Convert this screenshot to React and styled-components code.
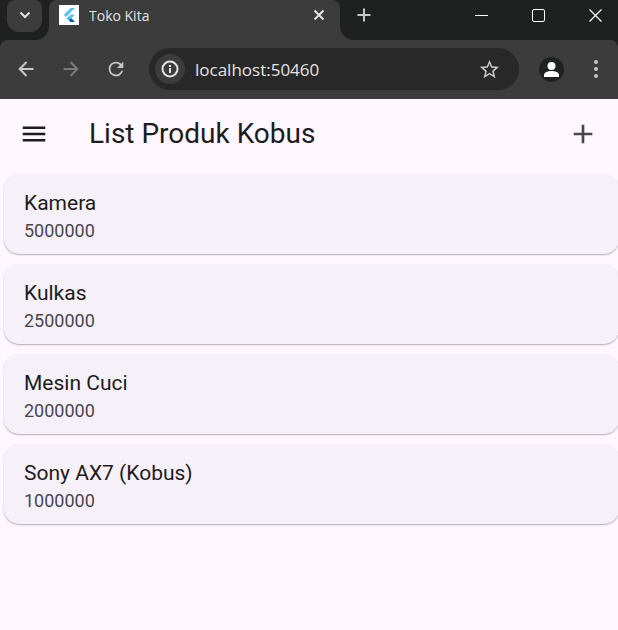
import React from "react";
import styled, { createGlobalStyle } from "styled-components";

const GlobalStyle = createGlobalStyle`
  *, *::before, *::after { box-sizing: border-box; }
  html, body { margin: 0; background: #fef7ff; }
  button, input { font: inherit; color: inherit; border: 0; padding: 0; background: none; }
  button { cursor: pointer; }
  svg { display: block; flex: none; }
`;

const Window = styled.div`
  min-height: 100vh;
  overflow-x: hidden;
  background: #fef7ff;
`;

const BrowserFrame = styled.header`
  background: #1f2120;
  color: #e3e3e3;
  font-family: "Open Sans", "Noto Sans", sans-serif;
`;

const TabStrip = styled.div`
  display: flex;
  height: 40px;
`;

const StripEdge = styled.div`
  display: flex;
  flex: ${({ $grow }) => ($grow ? "1 1 0" : "none")};
  background: #3c3c3c;
`;

const StripFill = styled.div`
  display: flex;
  flex: 1;
  align-items: flex-start;
  padding: ${({ $side }) => ($side === "left" ? "0 7px" : "0 1px 0 10px")};
  background: #1f2120;
  border-radius: ${({ $side }) => ($side === "left" ? "0 0 14px 0" : "0 0 0 14px")};
`;

const TabSearchButton = styled.button`
  display: grid;
  place-items: center;
  width: 35px;
  height: 32px;
  padding-bottom: 2px;
  background: #3c3c3c;
  border-radius: 8px 8px 12px 12px;
`;

const TabShell = styled.div`
  flex: 0 1 291px;
  min-width: 0;
  background: #1f2120;
`;

const Tab = styled.div`
  display: flex;
  align-items: flex-start;
  gap: 10px;
  height: 100%;
  padding: 5px 10px;
  background: #3c3c3c;
  border-radius: 8px 8px 0 0;
`;

const Favicon = styled.span`
  display: grid;
  place-items: center;
  width: 20px;
  height: 20px;
  background: #ffffff;
`;

const TabTitle = styled.span`
  flex: 1;
  min-width: 0;
  overflow: hidden;
  white-space: nowrap;
  font-size: 14px;
  line-height: 21px;
`;

const StripButton = styled.button`
  display: grid;
  place-items: center;
  width: ${({ $width }) => $width}px;
  height: ${({ $height }) => $height}px;
`;

const NewTabButton = styled(StripButton)`
  color: #c7c7c7;
`;

const WindowControls = styled.div`
  display: flex;
  gap: 13px;
  margin-left: auto;
  color: #ffffff;
`;

const Toolbar = styled.div`
  display: flex;
  align-items: center;
  height: 59px;
  padding: 0 10px 1px 11px;
  background: #3c3c3c;
  border-radius: 8px 8px 0 0;
`;

const NavGroup = styled.nav`
  display: flex;
  gap: 15px;
  margin-right: 18px;
`;

const NavButton = styled.button`
  display: grid;
  place-items: center;
  width: 30px;
  height: 30px;
  color: #c7c7c7;

  &:disabled { color: #7b7b7b; }
`;

const AddressBar = styled.div`
  display: flex;
  align-items: center;
  flex: 1;
  min-width: 0;
  height: 42px;
  padding: 0 15px 0 6px;
  background: #282828;
  border-radius: 21px;
`;

const SiteInfo = styled.button`
  display: grid;
  place-items: center;
  flex: none;
  width: 30px;
  height: 30px;
  background: #3c3c3c;
  border-radius: 50%;
`;

const AddressInput = styled.input`
  flex: 1;
  min-width: 0;
  height: 30px;
  margin-left: 10px;
  font-size: 17px;
  outline: none;
`;

const Profile = styled.button`
  display: grid;
  place-items: center;
  width: 25px;
  height: 25px;
  margin: 0 20px;
  background: #1f2120;
  border-radius: 50%;
  color: #ffffff;
`;

const MenuButton = styled(NavButton)`
  width: 24px;
`;

const AppBar = styled.div`
  display: flex;
  align-items: center;
  height: 70px;
  padding: 0 19px;
  color: #1d1b20;
  font-family: Roboto, sans-serif;
`;

const AppTitle = styled.h1`
  flex: 1;
  margin: 0 0 0 40px;
  font-size: 28px;
  font-weight: 400;
  line-height: 36px;
`;

const AppBarButton = styled.button`
  display: grid;
  place-items: center;
  width: ${({ $size }) => $size}px;
  height: ${({ $size }) => $size}px;
  color: ${({ $muted }) => ($muted ? "#49454f" : "#1d1b20")};
`;

const ProductList = styled.ul`
  display: grid;
  gap: 10px;
  margin: 0 -1px 0 0;
  padding: 5px 0 5px 4px;
  list-style: none;
  font-family: Roboto, sans-serif;
`;

const ProductCard = styled.button`
  display: block;
  width: 100%;
  padding: 14px 20px 10px;
  text-align: left;
  background: #f6f1f9;
  border-radius: 15px;
  box-shadow: 0 1px 2px rgba(0, 0, 0, 0.2), 0 1px 1px rgba(0, 0, 0, 0.12);
`;

const ProductName = styled.span`
  display: block;
  font-size: 21px;
  line-height: 30px;
  color: #1d1b20;
`;

const ProductPrice = styled.span`
  display: block;
  font-size: 18px;
  line-height: 26px;
  color: #49454f;
`;

const Stroke = ({ size, width = 2, children }) => (
  <svg width={size} height={size} viewBox={`0 0 ${size} ${size}`} fill="none" stroke="currentColor" strokeWidth={width} aria-hidden="true">
    {children}
  </svg>
);

const Solid = ({ size, children }) => (
  <svg width={size} height={size} viewBox="0 0 24 24" fill="currentColor" aria-hidden="true">
    {children}
  </svg>
);

const FlutterMark = () => (
  <svg width="16" height="18" viewBox="0 0 16 18" aria-hidden="true">
    <path d="M9.500 2h4.500L5 11 2.800 8.700z" fill="#54c5f8" />
    <path d="M9.500 8.500H14L10.300 12.300 8 10.200z" fill="#54c5f8" />
    <path d="M5.800 12.400 8 10.200l2.300 2.100L8 14.600z" fill="#29b6f6" />
    <path d="M8 14.600 10.300 12.300 14 16H9.400z" fill="#01579b" />
  </svg>
);

const products = [
  { name: "Kamera", price: 5000000 },
  { name: "Kulkas", price: 2500000 },
  { name: "Mesin Cuci", price: 2000000 },
  { name: "Sony AX7 (Kobus)", price: 1000000 },
];

export default function App() {
  return (
    <Window>
      <GlobalStyle />
      <BrowserFrame>
        <TabStrip>
          <StripEdge>
            <StripFill $side="left">
              <TabSearchButton aria-label="Search tabs">
                <Stroke size={14}><path d="M2.500 4.500 7 9l4.500-4.500" /></Stroke>
              </TabSearchButton>
            </StripFill>
          </StripEdge>
          <TabShell>
            <Tab>
              <Favicon><FlutterMark /></Favicon>
              <TabTitle>Toko Kita</TabTitle>
              <StripButton $width={22} $height={20} aria-label="Close tab">
                <Stroke size={12}><path d="m1.500 1.500 9 9m0-9-9 9" /></Stroke>
              </StripButton>
            </Tab>
          </TabShell>
          <StripEdge $grow>
            <StripFill $side="right">
              <NewTabButton $width={28} $height={30} aria-label="New tab">
                <Stroke size={14}><path d="M7 .5v13M.5 7h13" /></Stroke>
              </NewTabButton>
              <WindowControls>
                <StripButton $width={44} $height={31} aria-label="Minimize">
                  <Stroke size={13} width={1}><path d="M0 6.500h13" /></Stroke>
                </StripButton>
                <StripButton $width={44} $height={31} aria-label="Maximize">
                  <Stroke size={13} width={1}><rect x=".5" y=".5" width="12" height="12" rx="1.500" /></Stroke>
                </StripButton>
                <StripButton $width={44} $height={31} aria-label="Close window">
                  <Stroke size={13} width={1.2}><path d="m.5.5 12 12m0-12-12 12" /></Stroke>
                </StripButton>
              </WindowControls>
            </StripFill>
          </StripEdge>
        </TabStrip>
        <Toolbar>
          <NavGroup aria-label="Browser navigation">
            <NavButton aria-label="Back">
              <Stroke size={16}><path d="M15.500 8H2M8.500 1 1.700 8l6.800 7" /></Stroke>
            </NavButton>
            <NavButton aria-label="Forward" disabled>
              <Stroke size={16}><path d="M.5 8H14M7.500 1l6.800 7-6.800 7" /></Stroke>
            </NavButton>
            <NavButton aria-label="Reload">
              <Solid size={22}>
                <path d="M17.650 6.350A7.960 7.960 0 0 0 12 4a8 8 0 1 0 7.730 10h-2.080A6 6 0 1 1 12 6c1.660 0 3.140.69 4.220 1.780L13 11h7V4z" />
              </Solid>
            </NavButton>
          </NavGroup>
          <AddressBar>
            <SiteInfo aria-label="Site information">
              <Stroke size={18}>
                <circle cx="9" cy="9" r="7.500" />
                <path d="M9 8v5M9 5v2" />
              </Stroke>
            </SiteInfo>
            <AddressInput aria-label="Address" defaultValue="localhost:50460" spellCheck={false} />
            <NavButton aria-label="Bookmark this page">
              <Solid size={23}>
                <path d="m22 9.240-7.190-.62L12 2 9.190 8.630 2 9.240l5.460 4.730L5.820 21 12 17.270 18.180 21l-1.630-7.030zM12 15.400l-3.760 2.270 1-4.280-3.320-2.880 4.380-.38L12 6.100l1.710 4.040 4.380.38-3.320 2.880 1 4.280z" />
              </Solid>
            </NavButton>
          </AddressBar>
          <Profile aria-label="Profile">
            <Stroke size={17} width={0}>
              <circle cx="8.500" cy="5" r="4" fill="currentColor" />
              <path d="M1 16v-2c0-2.800 4-4 7.500-4s7.500 1.200 7.500 4v2z" fill="currentColor" />
            </Stroke>
          </Profile>
          <MenuButton aria-label="Browser menu">
            <Stroke size={20} width={0}>
              <circle cx="10" cy="3" r="2" fill="currentColor" />
              <circle cx="10" cy="10" r="2" fill="currentColor" />
              <circle cx="10" cy="17" r="2" fill="currentColor" />
            </Stroke>
          </MenuButton>
        </Toolbar>
      </BrowserFrame>
      <main>
        <AppBar>
          <AppBarButton $size={30} aria-label="Open navigation menu">
            <Solid size={30}><path d="M3 18h18v-2H3zm0-5h18v-2H3zm0-7v2h18V6z" /></Solid>
          </AppBarButton>
          <AppTitle>List Produk Kobus</AppTitle>
          <AppBarButton $size={32} $muted aria-label="Add product">
            <Solid size={32}><path d="M19 13h-6v6h-2v-6H5v-2h6V5h2v6h6z" /></Solid>
          </AppBarButton>
        </AppBar>
        <ProductList>
          {products.map(({ name, price }) => (
            <li key={name}>
              <ProductCard>
                <ProductName>{name}</ProductName>
                <ProductPrice>{price}</ProductPrice>
              </ProductCard>
            </li>
          ))}
        </ProductList>
      </main>
    </Window>
  );
}
